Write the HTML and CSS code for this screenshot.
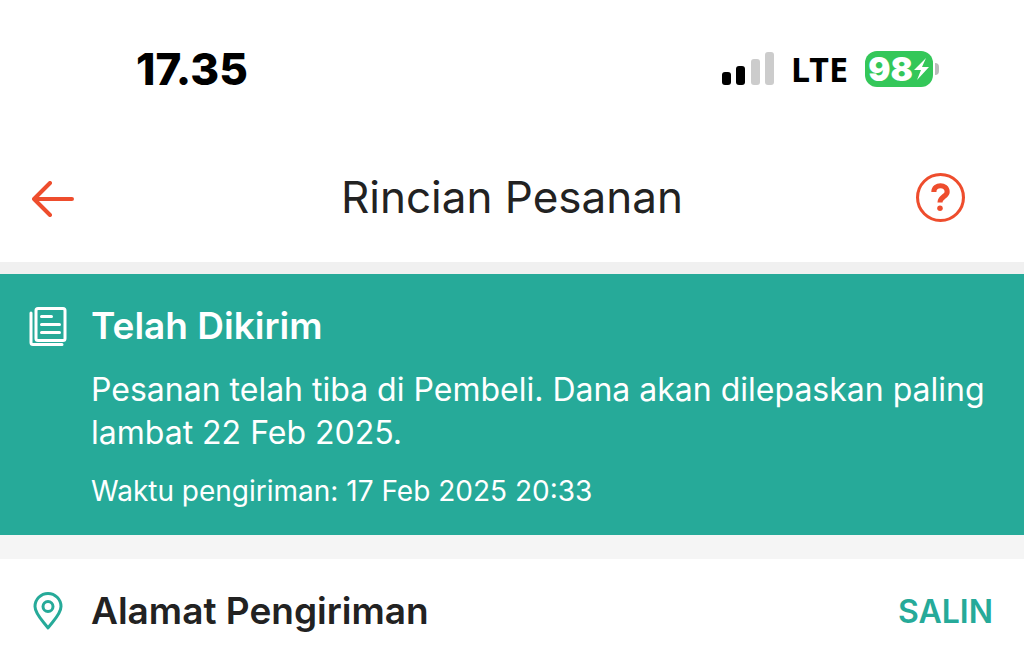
FILE: index.html
```html
<!DOCTYPE html>
<html lang="id">
    <head>
        <meta charset="UTF-8">
        <meta name="viewport" content="width=device-width, initial-scale=1">
        <title>Rincian Pesanan</title>
        <link rel="stylesheet" href="styles.css">
    </head>
    <body>
        <div class="statusbar">
            <time class="clock">17.35</time>
            <div class="indicators">
                <svg class="signal" viewBox="0 0 52 34" aria-hidden="true">
                    <rect x="0" y="20" width="9" height="13" rx="3"/>
                    <rect x="14" y="14" width="9" height="19" rx="3"/>
                    <rect class="off" x="29" y="7" width="9" height="26" rx="3"/>
                    <rect class="off" x="43" y="0" width="9" height="33" rx="3"/>
                </svg>
                <span class="network">LTE</span>
                <div class="battery">
                    <span class="level">98</span>
                    <svg class="bolt" viewBox="0 0 17 26" aria-hidden="true">
                        <path d="M13 2 1 14h7L4 24 16 11H9z"/>
                    </svg>
                </div>
            </div>
        </div>
        <header class="topbar">
            <button class="icon-button" type="button" aria-label="Kembali">
                <svg class="back" viewBox="0 0 42 36" aria-hidden="true">
                    <path d="M18 2 2 18l16 16M2 18h38"/>
                </svg>
            </button>
            <h1>Rincian Pesanan</h1>
            <button class="icon-button help-button" type="button" aria-label="Bantuan">
                <svg class="help" viewBox="0 0 48 48" aria-hidden="true">
                    <circle cx="24" cy="24" r="22.5"/>
                    <path d="M17.500 18.500c0-8 13-8 13 0 0 4.500-7 4.500-7 10.500"/>
                    <circle class="dot" cx="23.500" cy="34.500" r="2.7"/>
                </svg>
            </button>
        </header>
        <main>
            <section class="status">
                <svg class="document" viewBox="0 0 38 40" aria-hidden="true">
                    <rect x="7" y="1.5" width="29" height="32" rx="2"/>
                    <path d="M2 6v29.500q0 2 2 2H33M12.500 9.500h10M12.500 17.500h18M12.500 25.500h18"/>
                </svg>
                <div>
                    <h2>Telah Dikirim</h2>
                    <p class="description">Pesanan telah tiba di Pembeli. Dana akan dilepaskan paling lambat 22 Feb 2025.</p>
                    <p class="sent">Waktu pengiriman: 17 Feb 2025 20:33</p>
                </div>
            </section>
            <section class="address">
                <svg class="pin" viewBox="0 0 30 38" aria-hidden="true">
                    <path d="M15 36C10 29 2 22 2 14.500a13 13 0 0 1 26 0C28 22 20 29 15 36z"/>
                    <circle cx="15" cy="14.500" r="5"/>
                </svg>
                <h2>Alamat Pengiriman</h2>
                <button class="copy" type="button">SALIN</button>
            </section>
        </main>
    </body>
</html>
```
FILE: styles.css
```css
* {
    box-sizing: border-box;
}
body {
    margin: 0;
    background-color: #fff;
    color: #222;
    font-family: Inter, "Liberation Sans", sans-serif;
}
h1, h2, p {
    margin: 0;
}
svg {
    display: block;
    flex: none;
    fill: none;
    stroke-linecap: round;
    stroke-linejoin: round;
}
button {
    padding: 0;
    border: 0;
    background: none;
    font-family: inherit;
}
.statusbar {
    display: flex;
    justify-content: space-between;
    align-items: center;
    height: 138px;
    padding: 0 84px 0 136px;
    color: #000;
}
.clock {
    font-size: 44px;
    font-weight: 800;
}
.indicators {
    display: flex;
    align-items: center;
    gap: 17px;
}
.signal {
    width: 52px;
    height: 34px;
    fill: #000;
}
.signal .off {
    fill: #ccc;
}
.network {
    font-family: "Noto Sans", sans-serif;
    font-size: 34px;
    font-weight: 700;
}
.battery {
    position: relative;
    display: flex;
    align-items: center;
    justify-content: center;
    width: 68px;
    height: 36px;
    margin-right: 7px;
    border-radius: 12px;
    background-color: #34c759;
    color: #fff;
}
.battery::after {
    content: "";
    position: absolute;
    top: 12px;
    right: -6px;
    width: 4px;
    height: 12px;
    border-radius: 0 4px 4px 0;
    background-color: #bbb;
}
.level {
    font-size: 33px;
    font-weight: 900;
}
.bolt {
    width: 17px;
    height: 26px;
    fill: #fff;
}
.topbar {
    display: flex;
    align-items: center;
    height: 124px;
    padding: 0 59px 6px 32px;
}
.icon-button {
    display: flex;
    width: 76px;
}
.help-button {
    width: 49px;
}
.topbar h1 {
    flex: 1;
    font-size: 44px;
    font-weight: 400;
    text-align: center;
}
.back {
    width: 42px;
    height: 36px;
    margin-top: 4px;
    stroke: #ee4d2d;
    stroke-width: 4;
}
.help {
    width: 49px;
    height: 49px;
    stroke: #ee4d2d;
    stroke-width: 3;
}
.help path {
    stroke-width: 5;
    stroke-linecap: butt;
}
.help .dot {
    fill: #ee4d2d;
    stroke: none;
}
.status {
    display: flex;
    gap: 24px;
    padding: 29px 28px 26px 29px;
    border-top: 12px solid #f0f0f0;
    border-bottom: 24px solid #f5f5f5;
    background-color: #26aa99;
    color: #fff;
}
.document {
    width: 38px;
    height: 40px;
    margin-top: 4px;
    stroke: #fff;
    stroke-width: 3;
}
h2 {
    font-size: 37px;
    font-weight: 600;
    line-height: 46px;
}
.description {
    margin-top: 19px;
    font-size: 32px;
    line-height: 43px;
}
.sent {
    margin-top: 20px;
    font-size: 28px;
    line-height: 35px;
}
.address {
    display: flex;
    align-items: center;
    padding: 29px 31px 29px 33px;
}
.address h2 {
    flex: 1;
    margin-left: 28px;
}
.pin {
    width: 30px;
    height: 38px;
    stroke: #26aa99;
    stroke-width: 3;
}
.copy {
    color: #26aa99;
    font-size: 32px;
    font-weight: 600;
}
```
